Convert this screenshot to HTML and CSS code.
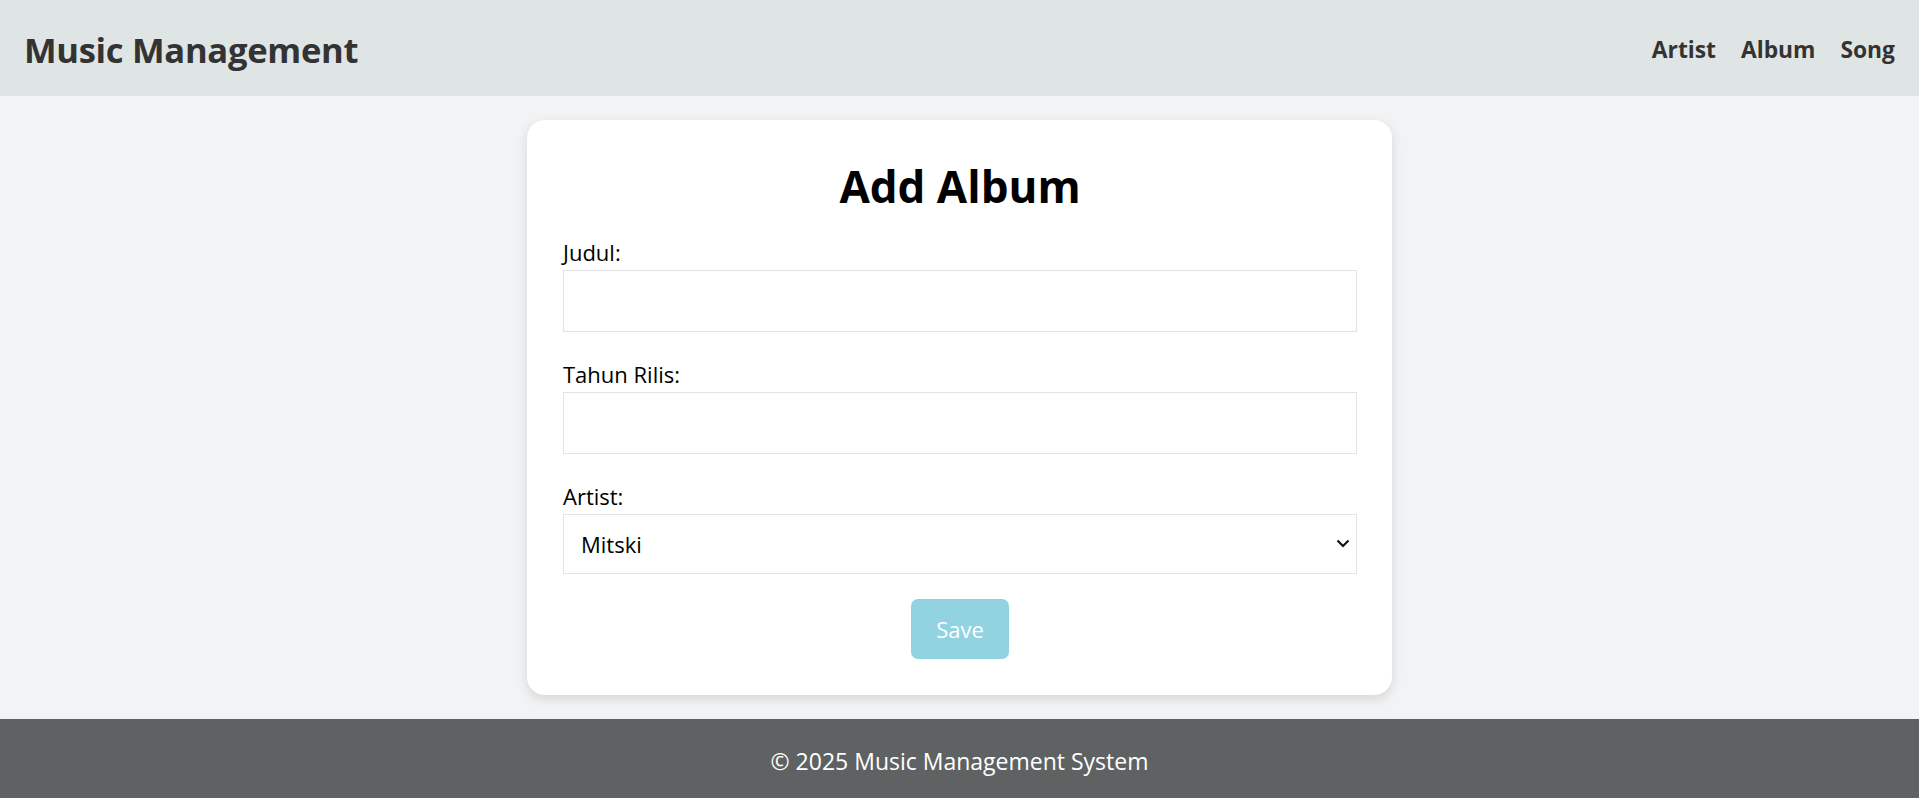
FILE: index.html
```html
<!DOCTYPE html>
<html lang="id">
<head>
<meta charset="utf-8">
<title>Add Album</title>
<link rel="stylesheet" href="styles.css">
</head>
<body>
<header class="topbar">
  <div class="brand">Music Management</div>
  <nav class="nav">
    <a href="#" class="nav-link">Artist</a>
    <a href="#" class="nav-link">Album</a>
    <a href="#" class="nav-link">Song</a>
  </nav>
</header>
<main class="main">
  <section class="card">
    <h2 class="card-title">Add Album</h2>
    <form class="form">
      <div class="field">
        <label class="label" for="judul">Judul:</label>
        <input class="input" id="judul" type="text">
      </div>
      <div class="field">
        <label class="label" for="tahun">Tahun Rilis:</label>
        <input class="input" id="tahun" type="text">
      </div>
      <div class="field field-last">
        <label class="label" for="artist">Artist:</label>
        <div class="select-wrap">
          <select class="select" id="artist">
            <option>Mitski</option>
          </select>
          <svg class="chevron" width="14" height="9" viewBox="0 0 14 9"><path d="M1.5 1.5 L7 7 L12.5 1.5" fill="none" stroke="#111" stroke-width="2.2"/></svg>
        </div>
      </div>
      <div class="actions">
        <button type="button" class="btn">Save</button>
      </div>
    </form>
  </section>
</main>
<footer class="footer">© 2025 Music Management System</footer>
</body>
</html>
```
FILE: styles.css
```css
* { box-sizing: border-box; }
html, body { margin: 0; padding: 0; }
body {
  font-family: "Open Sans", "Noto Sans", sans-serif;
  background: #f2f3f5;
  color: #000;
  font-size: 22px;
}
.topbar {
  height: 96px;
  background: #dfe5e5;
  display: flex;
  align-items: center;
  justify-content: space-between;
  padding: 2px 24px 0;
  color: #333;
}
.brand {
  font-size: 34.6px;
  font-weight: 700;
  letter-spacing: -0.3px;
}
.nav { display: flex; gap: 25px; }
.nav-link {
  color: #333;
  text-decoration: none;
  font-weight: 700;
  font-size: 22.8px;
}
.main {
  padding: 24px 0;
  display: flex;
  justify-content: center;
}
.card {
  width: 865px;
  background: #fff;
  border-radius: 18px;
  box-shadow: 0 4px 12px rgba(0,0,0,0.12);
  padding: 34px 35px 36px 36px;
}
.card-title {
  margin: 0 0 18px;
  text-align: center;
  font-size: 44px;
  font-weight: 700;
  line-height: 64px;
}
.field { margin-bottom: 26px; }
.field-last { margin-bottom: 25px; }
.label {
  display: block;
  line-height: 30px;
  font-size: 22px;
  padding-top: 1px;
  margin-bottom: 3px;
}
.input {
  display: block;
  width: 100%;
  height: 62px;
  border: 1px solid #e3e3e6;
  border-radius: 0;
  background: #fff;
  font: inherit;
  padding: 0 18px;
  outline: none;
}
.select-wrap { position: relative; }
.select {
  display: block;
  width: 100%;
  height: 60px;
  border: 1px solid #e3e3e6;
  background: #fff;
  font: inherit;
  font-size: 22px;
  padding: 0 17px;
  appearance: none;
  -webkit-appearance: none;
  border-radius: 0;
  color: #000;
}
.chevron {
  position: absolute;
  right: 7px;
  top: 25px;
  pointer-events: none;
}
.actions { display: flex; justify-content: center; }
.btn {
  width: 98px;
  height: 60px;
  background: #91d3e0;
  color: #fff;
  border: none;
  border-radius: 7px;
  font: inherit;
  font-size: 22px;
}
.footer {
  height: 80px;
  padding-top: 3px;
  background: #5f6263;
  color: #fff;
  display: flex;
  align-items: center;
  justify-content: center;
  font-size: 23px;
}
```
